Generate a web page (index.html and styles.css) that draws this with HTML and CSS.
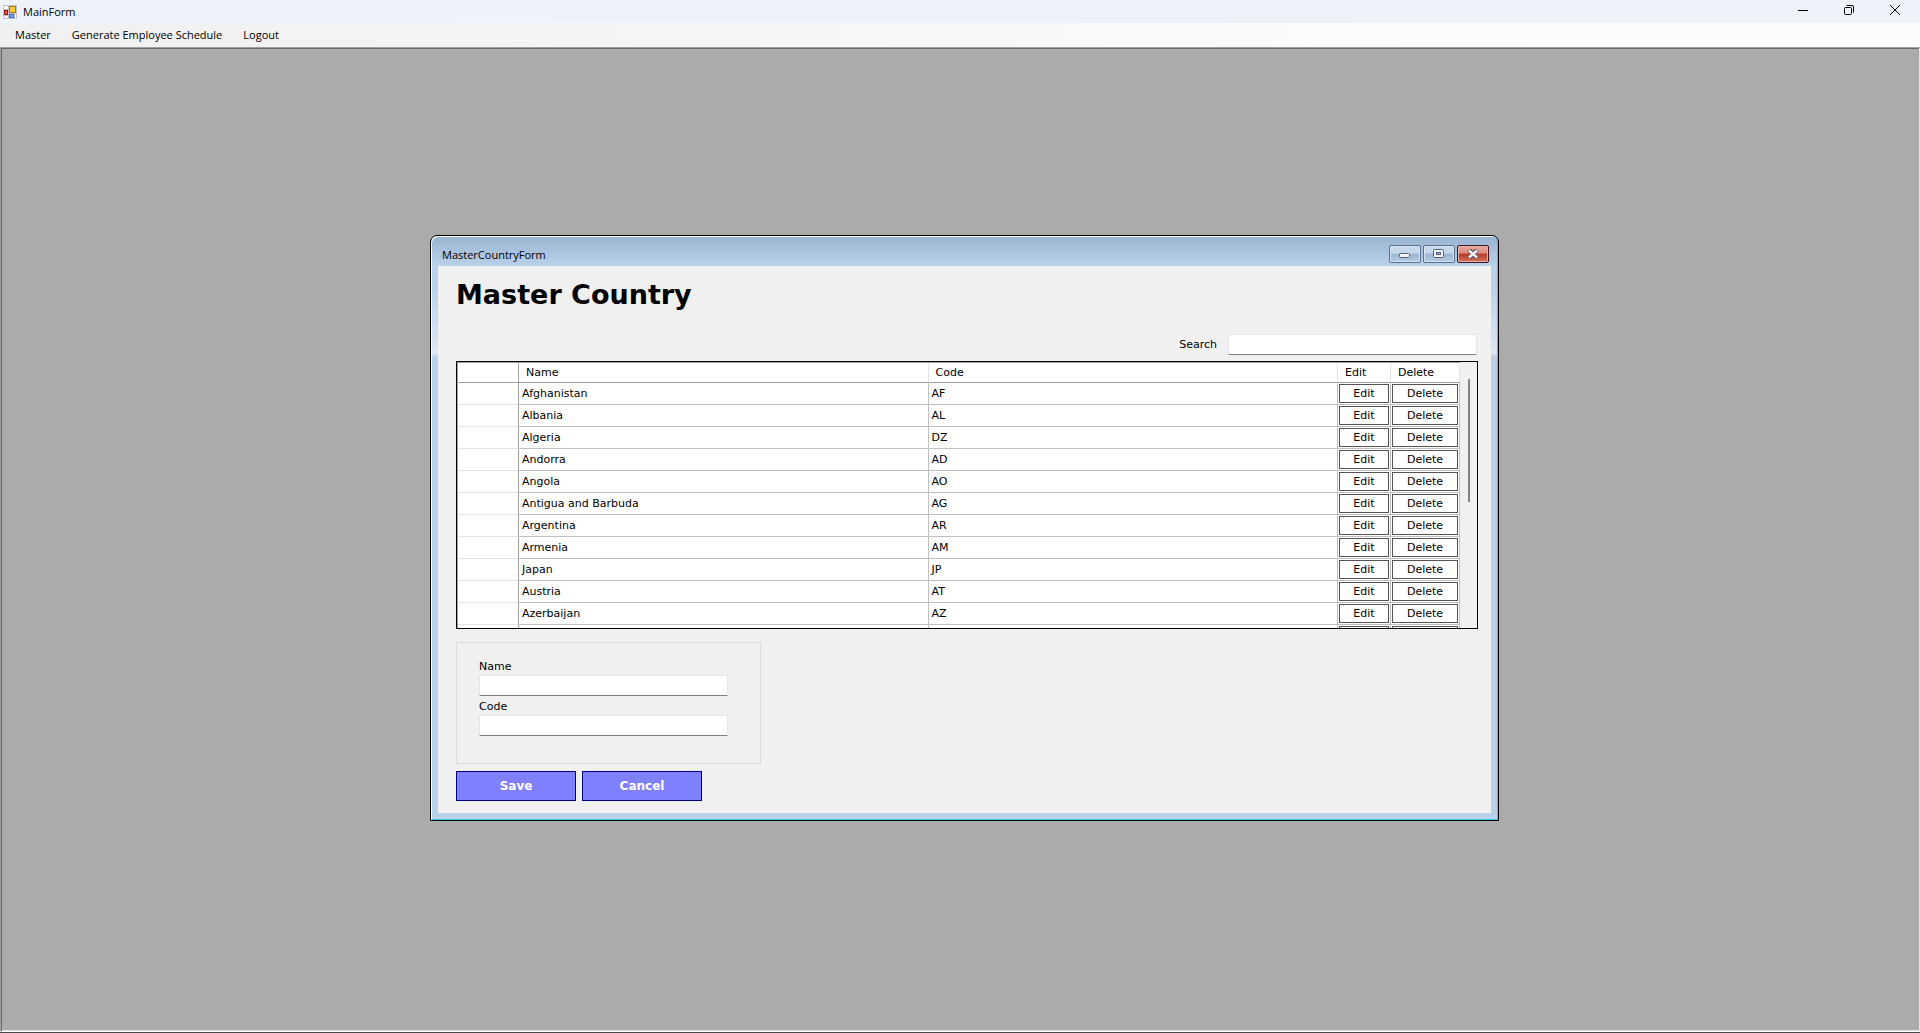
FILE: index.html
```html
<!DOCTYPE html>
<html lang="en">
<head>
<meta charset="utf-8">
<title>MainForm</title>
<link rel="stylesheet" href="styles.css">
</head>
<body>
<div class="app">
  <header class="titlebar">
    <svg class="app-icon" width="14" height="14" viewBox="0 0 14 14" aria-hidden="true">
      <rect width="14" height="14" fill="#c2c4c8"/><rect x="1" y="1" width="4" height="3" fill="#f6f8fc"/><rect x="1" y="11" width="4" height="2" fill="#f6f8fc"/><rect x="12" y="9" width="1" height="4" fill="#f6f8fc"/>
      <rect x="1" y="5" width="4" height="5" fill="#9a1a12"/><rect x="2" y="6" width="2" height="3" fill="#e0554a"/>
      <rect x="6" y="1" width="7" height="7" fill="#a87a10"/><rect x="7" y="2" width="5" height="5" fill="#fccb3d"/>
      <rect x="6" y="9" width="5" height="4" fill="#3a6fd0"/><rect x="7" y="10" width="3" height="2" fill="#7fb0f6"/>
    </svg>
    <span class="app-name">MainForm</span>
    <div class="caption">
      <button class="cap-btn" aria-label="Minimize"><svg width="12" height="12" viewBox="0 0 12 12"><path d="M1 6.5H11" stroke="#000" fill="none"/></svg></button>
      <button class="cap-btn" aria-label="Restore"><svg width="12" height="12" viewBox="0 0 12 12"><g stroke="#000" fill="none"><rect x="1.5" y="3.5" width="7" height="7" rx="1"/><path d="M3.5 1.5H9Q10.5 1.5 10.5 3V8.5"/></g></svg></button>
      <button class="cap-btn" aria-label="Close"><svg width="12" height="12" viewBox="0 0 12 12"><path d="M1 1L11 11M11 1L1 11" stroke="#000" fill="none"/></svg></button>
    </div>
  </header>
  <nav class="menubar">
    <button class="menu">Master</button>
    <button class="menu">Generate Employee Schedule</button>
    <button class="menu">Logout</button>
  </nav>
  <main class="desktop">
    <section class="window">
      <header class="win-title">
        <span>MasterCountryForm</span>
        <div class="win-btns">
          <button class="win-btn" aria-label="Minimize"><svg width="12" height="10" viewBox="0 0 12 10"><rect x="0.5" y="4.5" width="10" height="4" rx="1" fill="#f4f4f6" stroke="#54607a"/></svg></button>
          <button class="win-btn" aria-label="Maximize"><svg width="12" height="10" viewBox="0 0 12 10"><rect x="0.5" y="0.5" width="10" height="8" rx="1" fill="#f4f4f6" stroke="#54607a"/><rect x="3.5" y="3.5" width="4" height="2" fill="#9fb8d4" stroke="#54607a"/></svg></button>
          <button class="win-btn close" aria-label="Close"><svg width="12" height="10" viewBox="0 0 12 10"><path d="M2 1L10 9M10 1L2 9" stroke="#54505e" stroke-width="4.500" fill="none"/><path d="M2 1.5L10 8.5M10 1.5L2 8.5" stroke="#f4f4f6" stroke-width="2.500" fill="none"/></svg></button>
        </div>
      </header>
      <div class="client">
        <h1>Master Country</h1>
        <div class="search"><label for="search">Search</label><input class="field" id="search" type="text"></div>
        <div class="grid">
          <table>
            <colgroup><col class="c-head"><col><col><col class="c-edit"><col class="c-del"></colgroup>
            <thead><tr><th></th><th>Name</th><th>Code</th><th>Edit</th><th>Delete</th></tr></thead>
            <tbody>
              <tr><th></th><td>Afghanistan</td><td>AF</td><td><button>Edit</button></td><td><button>Delete</button></td></tr>
              <tr><th></th><td>Albania</td><td>AL</td><td><button>Edit</button></td><td><button>Delete</button></td></tr>
              <tr><th></th><td>Algeria</td><td>DZ</td><td><button>Edit</button></td><td><button>Delete</button></td></tr>
              <tr><th></th><td>Andorra</td><td>AD</td><td><button>Edit</button></td><td><button>Delete</button></td></tr>
              <tr><th></th><td>Angola</td><td>AO</td><td><button>Edit</button></td><td><button>Delete</button></td></tr>
              <tr><th></th><td>Antigua and Barbuda</td><td>AG</td><td><button>Edit</button></td><td><button>Delete</button></td></tr>
              <tr><th></th><td>Argentina</td><td>AR</td><td><button>Edit</button></td><td><button>Delete</button></td></tr>
              <tr><th></th><td>Armenia</td><td>AM</td><td><button>Edit</button></td><td><button>Delete</button></td></tr>
              <tr><th></th><td>Japan</td><td>JP</td><td><button>Edit</button></td><td><button>Delete</button></td></tr>
              <tr><th></th><td>Austria</td><td>AT</td><td><button>Edit</button></td><td><button>Delete</button></td></tr>
              <tr><th></th><td>Azerbaijan</td><td>AZ</td><td><button>Edit</button></td><td><button>Delete</button></td></tr>
              <tr><th></th><td></td><td></td><td><button aria-label="Edit"></button></td><td><button aria-label="Delete"></button></td></tr>
            </tbody>
          </table>
          <div class="scroll"><div class="thumb"></div></div>
        </div>
        <form class="form">
          <div class="group">
            <label for="name">Name</label><input class="field" id="name" type="text">
            <label for="code">Code</label><input class="field" id="code" type="text">
          </div>
          <div class="actions"><button class="action" type="button">Save</button><button class="action" type="button">Cancel</button></div>
        </form>
      </div>
    </section>
  </main>
</div>
</body>
</html>
```
FILE: styles.css
```css
* { box-sizing: border-box; }
body { margin: 0; font: 11px/14px Verdana, "DejaVu Sans", sans-serif; color: #000; }
button, input { font: inherit; color: inherit; margin: 0; padding: 0; }
button { border: 0; background: none; }
svg { display: block; }
h1 { margin: 0; }

.app { display: flex; flex-direction: column; min-height: 100vh; border-bottom: 1px solid #484848; }
.titlebar { display: flex; align-items: center; height: 23px; padding: 0 2px 0 3px; gap: 6px; background: #eef3fb; font: 11px/16px "Segoe UI", "Open Sans", sans-serif; }
.caption { display: flex; align-self: stretch; margin-left: auto; }
.cap-btn { display: flex; align-items: center; justify-content: center; width: 46px; height: 20px; }
.menubar { display: flex; align-items: center; height: 24px; padding: 0 8px; gap: 7px; background: linear-gradient(90deg, #f0f0f0, #fcfcfc 80%); font: 11px/16px "Segoe UI", "Open Sans", sans-serif; }
.menu { padding: 0 7px; }

.desktop { flex: 1; display: flex; justify-content: center; align-items: flex-start; padding: 187px 0 32px 9px; background: #ababab; border: 1px solid; border-color: #a0a0a0 #e3e3e3 #fff #a0a0a0; box-shadow: inset 1px 1px #696969, inset 0 -1px #e3e3e3; }
.window { width: 1069px; max-width: 100%; padding: 1px 7px 7px; border: 1px solid #000; border-radius: 7px 7px 0 0; background: linear-gradient(#99b4d1, #b9d1ea 30px, #b9d1ea 50px, #dce8f5 118px, #b9d1ea 120px); box-shadow: inset 1px 1px #fff, inset -1px -1px #37bfe0; }
.win-title { display: flex; align-items: flex-start; height: 29px; padding: 8px 2px 0 4px; font: 11px/20px "Segoe UI", "Open Sans", sans-serif; }
.win-btns { display: flex; gap: 2px; margin-left: auto; }
.win-btn { display: flex; align-items: center; justify-content: center; width: 32px; height: 18px; border: 1px solid #5b6f8c; border-radius: 2px; background: linear-gradient(#c5d7eb 0 45%, #9db6d3 50%, #b5cce6); box-shadow: inset 0 0 0 1px #d5e4f4; }
.win-btn.close { border-color: #431422; background: linear-gradient(#e8a99e, #d98a7c 45%, #b83a24 50%, #d4745e); box-shadow: inset 0 0 0 1px #e9b0a6; }

.client { padding: 13px 13px 12px 18px; background: #f0f0f0; }
h1 { font-size: 27px; line-height: 32px; }
.search { display: flex; justify-content: flex-end; align-items: center; gap: 11px; margin-top: 23px; padding-right: 1px; }
.field { width: 249px; height: 21px; padding: 0 3px; border: 1px solid #e6e6e6; border-bottom-color: #808080; border-radius: 1px; background: #fff; }

.grid { display: flex; height: 268px; margin-top: 6px; border: 1px solid #000; overflow: hidden; }
table { flex: 1; table-layout: fixed; width: 100%; border-collapse: separate; border-spacing: 0; background: #fff; border: 1px solid #a0a0a0; border-width: 1px 0 0 1px; }
.c-head { width: 61px; }
.c-edit { width: 53px; }
.c-del { width: 69px; }
th, td { height: 22px; padding: 0 3px; text-align: left; font-weight: normal; border: 0 solid #c0c0c0; border-width: 0 1px 1px 0; }
thead th { height: 20px; padding: 0 7px; border-bottom-color: #a0a0a0; border-right-color: #e5e5e5; }
tbody th { border-bottom-color: #e5e5e5; }
tr th:first-child { border-right-color: #a0a0a0; }
td:nth-child(n+4) { padding: 1px; }
td button { display: block; width: 100%; height: 19px; border: 1px solid #555; text-align: center; }
.scroll { flex: none; width: 17px; padding: 17px 7px 17px 8px; background: #f0f0f0; }
.thumb { height: 123px; background: #858585; }

.form { margin-top: 13px; }
.group { display: flex; flex-direction: column; align-items: flex-start; width: 305px; height: 122px; padding: 16px 22px; border: 1px solid #dcdcdc; }
.group label { line-height: 16px; }
.group .field { margin-bottom: 3px; }
.actions { display: flex; gap: 6px; margin-top: 7px; }
.action { width: 120px; height: 30px; border: 1px solid #000080; background: #8080ff; color: #fff; font-weight: bold; font-size: 12px; }
```
